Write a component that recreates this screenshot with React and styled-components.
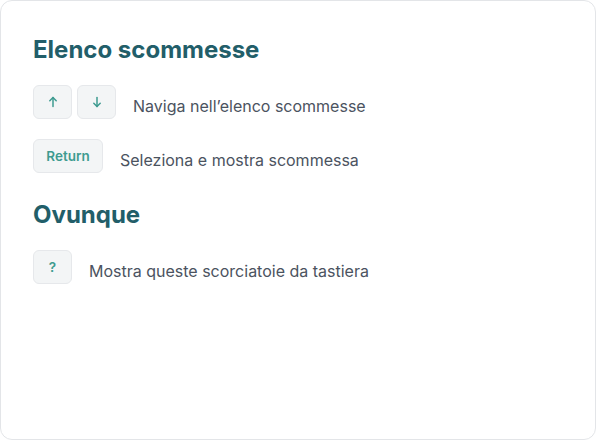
import React from 'react';
import styled, { createGlobalStyle } from 'styled-components';

const GlobalStyle = createGlobalStyle`
    html, body {
        margin: 0;
        padding: 0;
        background: #ffffff;
    }
    body {
        font-family: Inter, "Noto Sans", sans-serif;
    }
`

const Card = styled.div`
    box-sizing: border-box;
    width: 596px;
    height: 440px;
    border: 1px solid #e3e5e8;
    border-radius: 12px;
    padding: 33px 32px;
    background: #ffffff;
`

const Heading = styled.h2`
    margin: 0 0 19px 0;
    font-size: 24px;
    line-height: 32px;
    font-weight: 700;
    color: #225e69;
`

const Section = styled.section`
    margin-bottom: 26px;
`

const Row = styled.div`
    display: flex;
    align-items: center;
    margin-bottom: 20px;

    &:last-child {
        margin-bottom: 0;
    }
`

const Keys = styled.div`
    display: flex;
    gap: 5px;
    margin-right: 17px;
`

const Key = styled.kbd`
    box-sizing: border-box;
    display: flex;
    align-items: center;
    justify-content: center;
    min-width: ${props => props.wide ? "70px" : "39px"};
    height: 34px;
    padding: 0 12px;
    border: 1px solid #e6e8eb;
    border-radius: 6px;
    background: #f3f5f6;
    color: #3e9b90;
    font-family: Inter, sans-serif;
    font-size: 13.5px;
    font-weight: 600;
`

const Label = styled.span`
    padding-top: 8px;
    font-size: 16px;
    color: #4b5360;
`

const Arrow = ({ down }) => (
    <svg width="10" height="12" viewBox="0 0 10 12" fill="none" stroke="#3e9b90" strokeWidth="1.5" strokeLinecap="round" strokeLinejoin="round">
        {down ? (
            <>
                <path d="M5 1.5v9" />
                <path d="M1.8 7.3L5 10.5l3.2-3.2" />
            </>
        ) : (
            <>
                <path d="M5 10.5v-9" />
                <path d="M1.8 4.7L5 1.5l3.2 3.2" />
            </>
        )}
    </svg>
)

const shortcuts = [
    {
        title: "Elenco scommesse",
        rows: [
            { keys: [<Arrow key="u" />, <Arrow key="d" down />], label: "Naviga nell’elenco scommesse" },
            { keys: ["Return"], label: "Seleziona e mostra scommessa", wide: true },
        ]
    },
    {
        title: "Ovunque",
        rows: [
            { keys: ["?"], label: "Mostra queste scorciatoie da tastiera" },
        ]
    }
]

export default function App() {
    return (
        <>
            <GlobalStyle />
            <Card>
                {shortcuts.map(section => (
                    <Section key={section.title}>
                        <Heading>{section.title}</Heading>
                        {section.rows.map(row => (
                            <Row key={row.label}>
                                <Keys>
                                    {row.keys.map((k, i) => (
                                        <Key key={i} wide={row.wide}>{k}</Key>
                                    ))}
                                </Keys>
                                <Label>{row.label}</Label>
                            </Row>
                        ))}
                    </Section>
                ))}
            </Card>
        </>
    )
}
